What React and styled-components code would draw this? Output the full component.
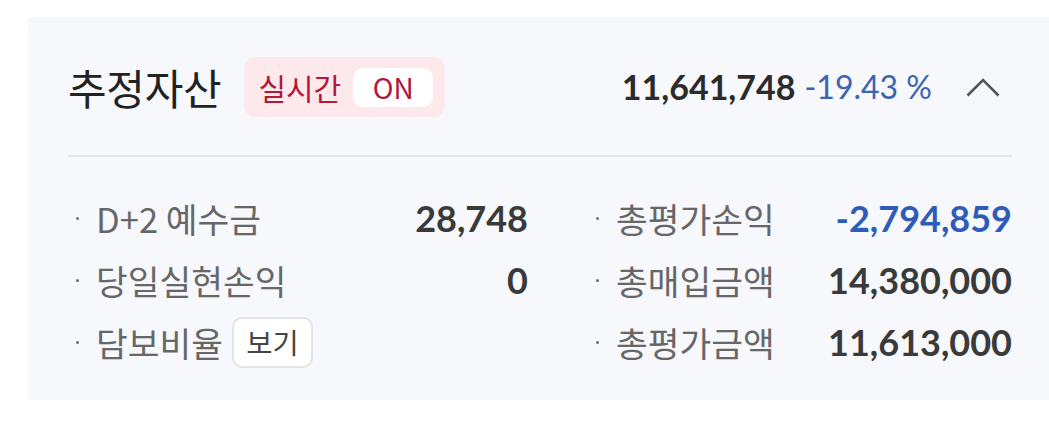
import React from "react";
import styled, { createGlobalStyle } from "styled-components";

const GlobalStyle = createGlobalStyle`
  html, body {
    margin: 0;
    padding: 0;
    background: #ffffff;
    overflow: hidden;
  }
  body {
    font-family: "Noto Sans CJK KR", "Noto Sans", sans-serif;
  }
`;

const Page = styled.div`
  width: 1049px;
  height: 423px;
  padding: 17px 0 0 28px;
  box-sizing: border-box;
  overflow: hidden;
`;

const Card = styled.section`
  width: 1024px;
  box-sizing: border-box;
  background: #f6f8fc;
  padding: 40px 40px 27px 40px;
`;

const Header = styled.div`
  display: flex;
  align-items: center;
  height: 60px;
`;

const Title = styled.h2`
  margin: 0;
  font-family: "Noto Sans CJK KR", sans-serif;
  font-weight: 400;
  font-size: 42px;
  letter-spacing: -0.3px;
  line-height: 60px;
  color: #222222;
`;

const LiveBadge = styled.div`
  display: flex;
  align-items: center;
  height: 60px;
  box-sizing: border-box;
  margin-left: 23px;
  padding: 0 12px 0 14px;
  gap: 12px;
  background: #fde9eb;
  border-radius: 12px;
  color: #b3173b;
`;

const BadgeLabel = styled.span`
  font-family: "Noto Sans CJK KR", sans-serif;
  font-size: 30px;
  line-height: 1;
`;

const OnPill = styled.span`
  display: flex;
  align-items: center;
  justify-content: center;
  width: 80px;
  height: 39px;
  background: #ffffff;
  border-radius: 10px;
  font-family: "Noto Sans CJK KR", sans-serif;
  font-size: 28px;
  line-height: 1;
`;

const Summary = styled.div`
  margin-left: auto;
  display: flex;
  align-items: center;
  gap: 9px;
`;

const Amount = styled.span`
  font-family: Lato, sans-serif;
  font-weight: 700;
  font-size: 34px;
  color: #2b2b2b;
  line-height: 1;
`;

const Rate = styled.span`
  font-family: Lato, sans-serif;
  font-weight: 400;
  font-size: 32px;
  color: #3d63b3;
  line-height: 1;
`;

const ToggleButton = styled.button`
  display: flex;
  align-items: center;
  margin-left: 25px;
  padding: 0 12px 0 0;
  border: none;
  background: transparent;
  color: #555555;
  cursor: pointer;
`;

const Divider = styled.hr`
  margin: 38px 0 30px 0;
  border: none;
  height: 2px;
  background: #e5e6e8;
`;

const Grid = styled.div`
  display: grid;
  grid-template-columns: 460px 1fr;
  column-gap: 60px;
`;

const Row = styled.div`
  display: flex;
  align-items: center;
  justify-content: space-between;
  height: 62px;
  padding-left: 8px;
`;

const LabelWrap = styled.div`
  display: flex;
  align-items: center;
  gap: 9px;
`;

const Label = styled.span`
  display: flex;
  align-items: center;
  font-family: "Noto Sans CJK KR", sans-serif;
  font-size: 34.5px;
  color: #676767;
  line-height: 1;

  &::before {
    content: "";
    width: 3px;
    height: 3px;
    border-radius: 50%;
    background: #707070;
    margin-right: 17px;
  }
`;

const ViewButton = styled.button`
  display: flex;
  align-items: center;
  justify-content: center;
  width: 81px;
  height: 51px;
  box-sizing: border-box;
  border: 2px solid #e3e4e6;
  border-radius: 10px;
  background: #ffffff;
  font-family: "Noto Sans CJK KR", sans-serif;
  font-size: 28.5px;
  color: #444444;
  padding: 0;
  line-height: 1;
`;

const Value = styled.span`
  font-family: Lato, sans-serif;
  font-weight: 700;
  font-size: 36px;
  line-height: 1;
  color: ${(p) => (p.$negative ? "#2f5cb8" : "#3a3a3a")};
`;

const rows = [
  { label: "D+2 예수금", value: "28,748" },
  { label: "총평가손익", value: "-2,794,859", negative: true },
  { label: "당일실현손익", value: "0" },
  { label: "총매입금액", value: "14,380,000" },
  { label: "담보비율", button: "보기" },
  { label: "총평가금액", value: "11,613,000" },
];

function ChevronUp() {
  return (
    <svg width="34" height="20" viewBox="0 0 34 20" fill="none">
      <path
        d="M1.5 18.5 L17 3 L32.5 18.5"
        stroke="currentColor"
        strokeWidth="2.6"
        strokeLinecap="butt"
        strokeLinejoin="miter"
      />
    </svg>
  );
}

export default function App() {
  return (
    <Page>
      <GlobalStyle />
      <Card>
        <Header>
          <Title>추정자산</Title>
          <LiveBadge>
            <BadgeLabel>실시간</BadgeLabel>
            <OnPill>ON</OnPill>
          </LiveBadge>
          <Summary>
            <Amount>11,641,748</Amount>
            <Rate>-19.43 %</Rate>
            <ToggleButton aria-label="접기">
              <ChevronUp />
            </ToggleButton>
          </Summary>
        </Header>
        <Divider />
        <Grid>
          {rows.map((r) => (
            <Row key={r.label}>
              <LabelWrap>
                <Label>{r.label}</Label>
                {r.button && <ViewButton>{r.button}</ViewButton>}
              </LabelWrap>
              {r.value && <Value $negative={r.negative}>{r.value}</Value>}
            </Row>
          ))}
        </Grid>
      </Card>
    </Page>
  );
}
